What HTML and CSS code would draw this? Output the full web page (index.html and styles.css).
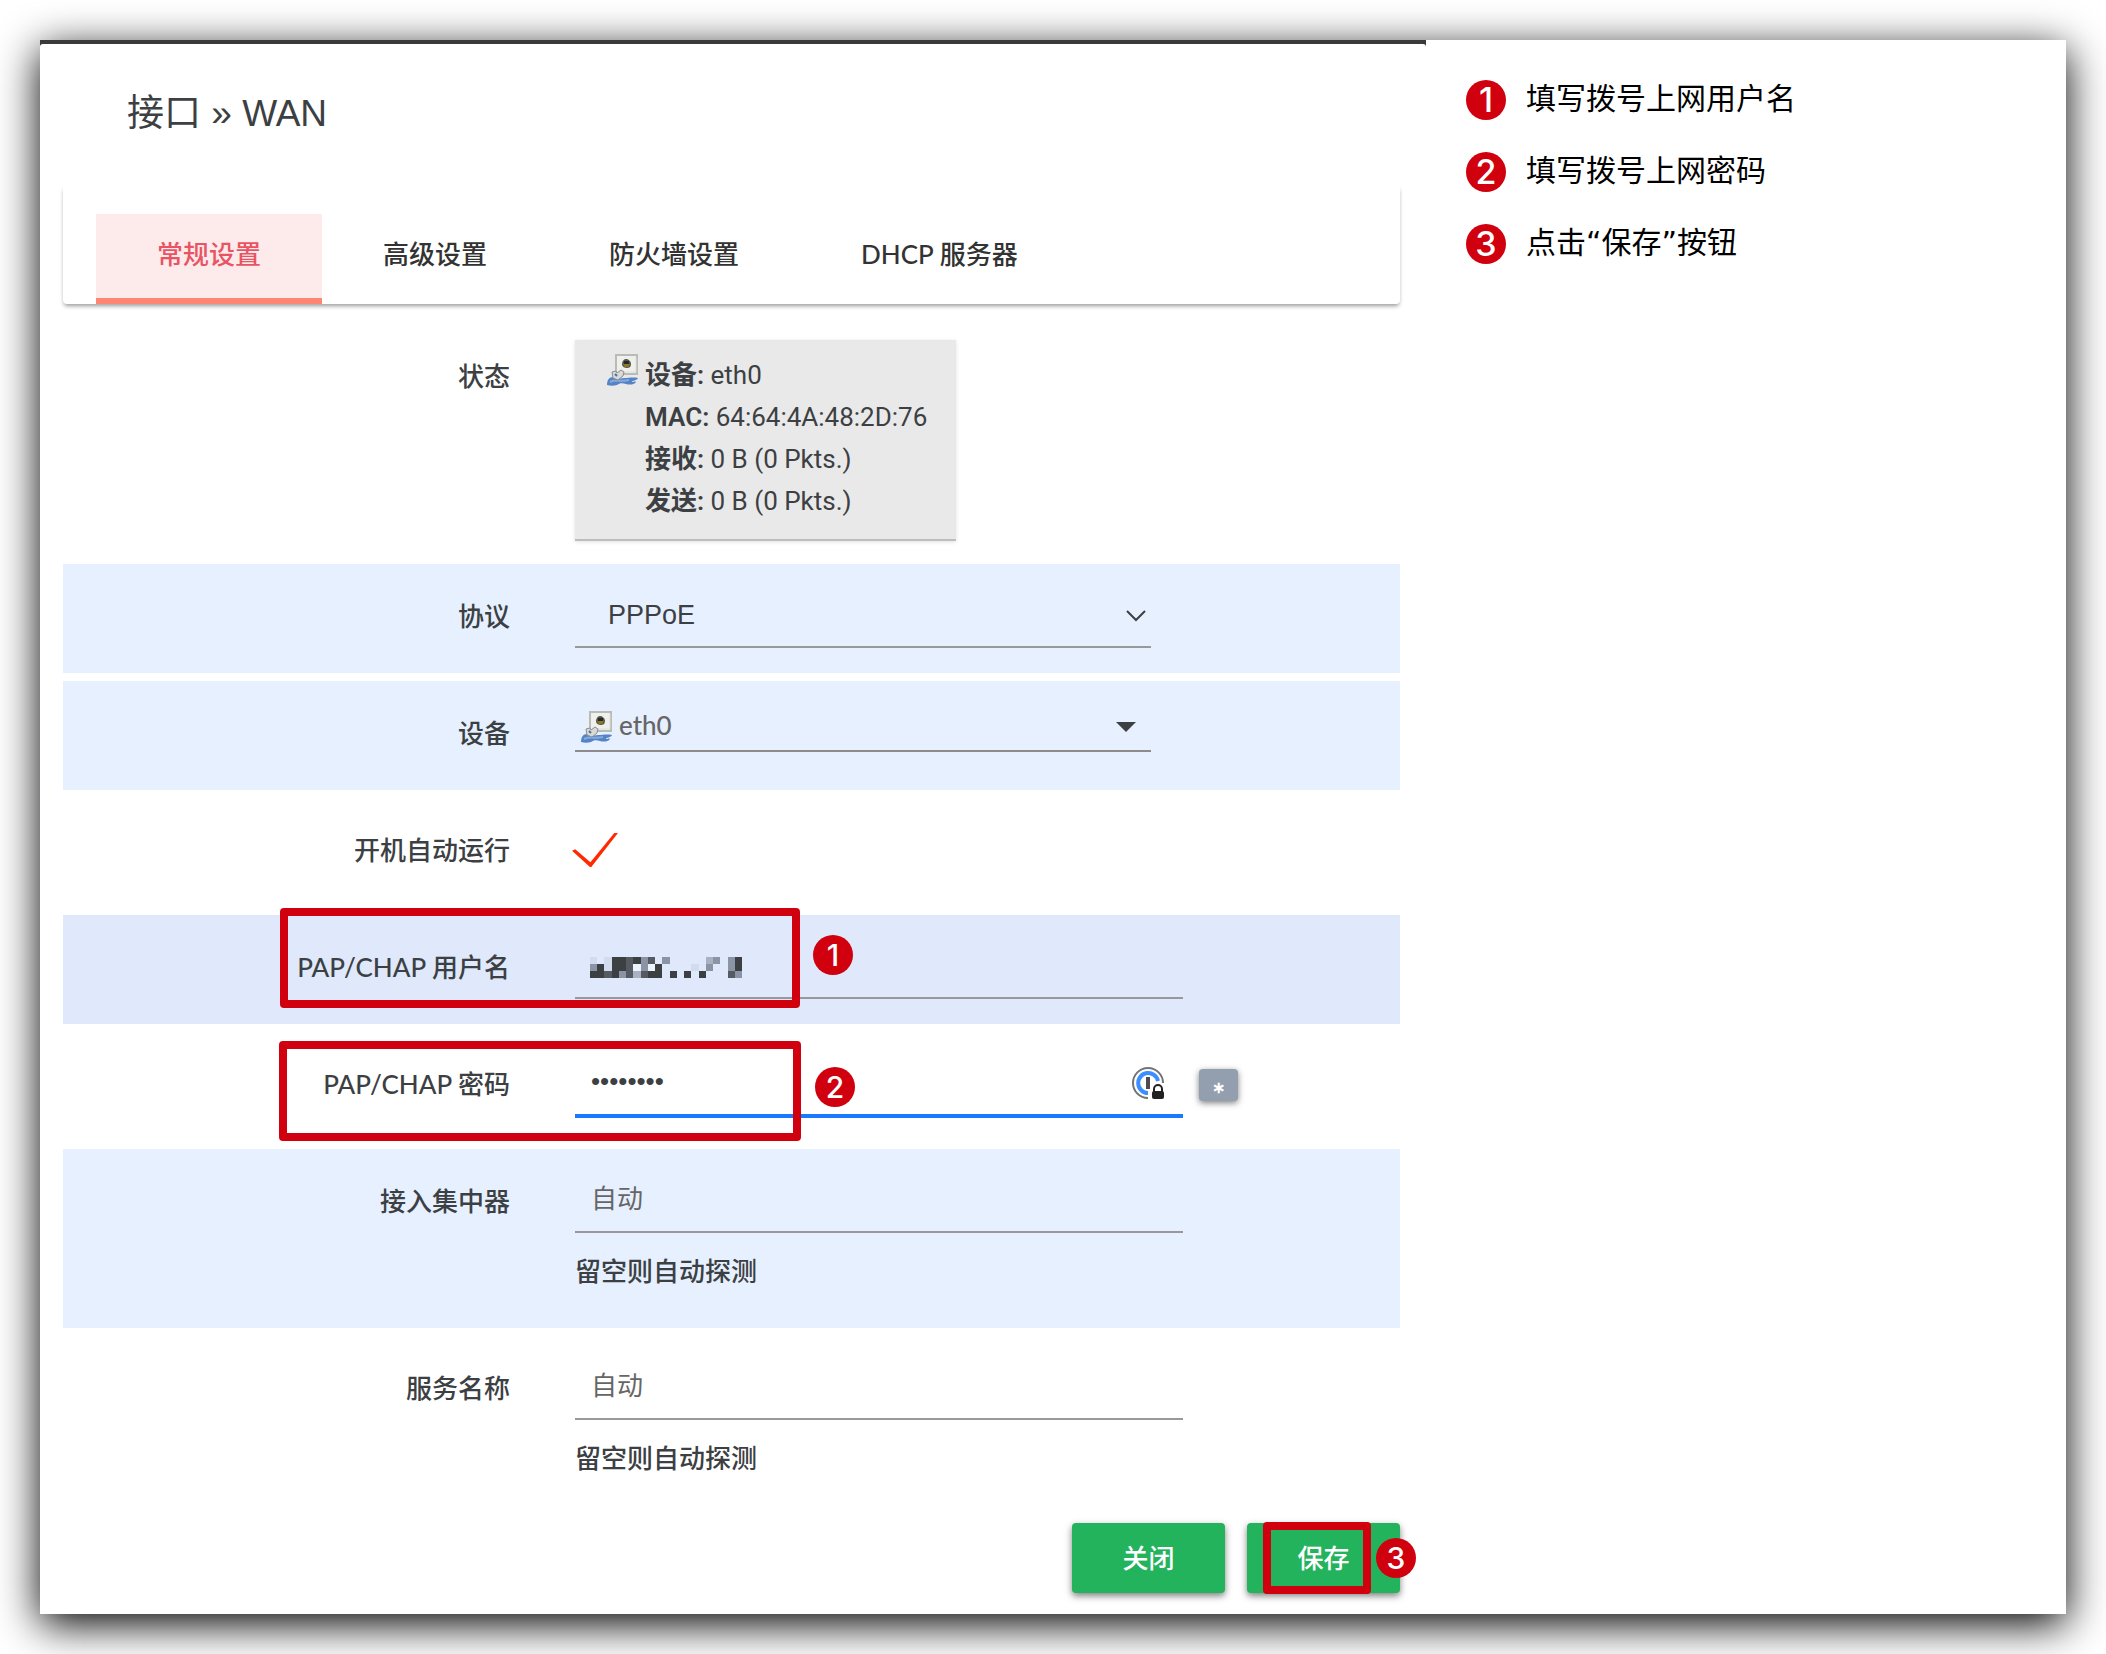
FILE: index.html
```html
<!DOCTYPE html>
<html lang="zh-CN">
<head>
<meta charset="utf-8">
<meta name="viewport" content="width=device-width, initial-scale=1">
<title>接口 » WAN</title>
<link rel="stylesheet" href="styles.css">
</head>
<body>
<svg class="defs" aria-hidden="true">
  <symbol id="ethernet" viewBox="0 0 32 32">
    <rect x="9" y="1" width="21" height="19" fill="#efefec" stroke="#b9bbb7" stroke-width="2"/>
    <path d="M11 18h18V3" fill="none" stroke="#dddeda" stroke-width="1"/>
    <path d="M15 10c0-3 2-5 4-5s5 2 5 5-2 4-4 4-5-1-5-4z" fill="#55574f"/>
    <path d="M17 7h5v3h-5z" fill="#26282a"/>
    <path d="M16 10h7l-2 3h-3z" fill="#8d7c1e"/>
    <path d="M0 31c0-5 2-8 6-8 4 1 7 2 11 1 5 0 9-1 14 0-1 3-6 2-6 4 2 0 4-1 4 0-2 3-7 3-10 2-4-1-6-1-9 1-3 1-7 1-10 0z" fill="#5484c6"/>
    <path d="M3 28c6-3 11 0 19-2" fill="none" stroke="#86aade" stroke-width="2"/>
    <path d="M5 18l4-1 1 2 4-3 3 2-1 4-5 4-5-2z" fill="#d9dad7" stroke="#8b8d8a" stroke-width="1"/>
    <path d="M8 20l2 2" fill="none" stroke="#4b6f9e" stroke-width="2"/>
  </symbol>
</svg>
<div class="card">
  <main class="pane">
    <div class="pane-body">
      <h1 class="title">接口 » WAN</h1>
      <nav class="tabs">
        <a class="tab tab-active" href="#general">常规设置</a>
        <a class="tab" href="#advanced">高级设置</a>
        <a class="tab" href="#firewall">防火墙设置</a>
        <a class="tab" href="#dhcp">DHCP 服务器</a>
      </nav>
      <form class="form">
        <div class="row row-status">
          <span class="label">状态</span>
          <div class="status">
            <svg class="eth-icon"><use href="#ethernet"/></svg>
            <div class="status-lines">
              <div><b>设备:</b> eth0</div>
              <div><b>MAC:</b> 64:64:4A:48:2D:76</div>
              <div><b>接收:</b> 0 B (0 Pkts.)</div>
              <div><b>发送:</b> 0 B (0 Pkts.)</div>
            </div>
          </div>
        </div>
        <div class="row row-tint">
          <label class="label" for="proto">协议</label>
          <div class="select-wrap">
            <select class="control select" id="proto"><option>PPPoE</option></select>
            <svg class="chevron" viewBox="0 0 20 12"><path d="M1 1l9 9 9-9" fill="none" stroke="#3c4043" stroke-width="2"/></svg>
          </div>
        </div>
        <div class="row row-tint">
          <span class="label" id="device-label">设备</span>
          <button class="device" type="button" aria-labelledby="device-label">
            <svg class="eth-icon"><use href="#ethernet"/></svg>
            <span class="device-name">eth0</span>
            <svg class="caret" viewBox="0 0 20 10"><path d="M0 0h20L10 10z" fill="#3c4043"/></svg>
          </button>
        </div>
        <div class="row">
          <label class="label" for="auto">开机自动运行</label>
          <input class="check" id="auto" type="checkbox" checked>
        </div>
        <div class="row row-user">
          <label class="label" for="user">PAP/CHAP 用户名</label>
          <div class="field">
            <input class="control" id="user" type="text">
            <svg class="mask" viewBox="0 0 21 3" preserveAspectRatio="none" shape-rendering="crispEdges">
              <path fill="#3c4043" d="M3 0h2v1H3zM6 0h1v1H6zM20 0h1v2h-1zM1 1h1v1H1zM3 1h2v1H3zM9 1h1v1H9zM0 2h2v1H0zM3 2h1v1H3zM8 2h2v1H8zM11 2h1v1h-1zM13 2h1v1h-1zM15 2h1v1h-1z"/>
              <path fill="#565b63" d="M8 0h1v1H8zM5 0h1v2H5zM2 2h1v1H2zM5 2h1v1H5zM7 2h1v1H7zM19 2h1v1h-1z"/>
              <path fill="#8b94a4" d="M7 0h1v2H7zM10 0h1v1h-1zM17 0h1v1h-1zM19 0h1v2h-1zM0 1h1v1H0zM16 1h1v1h-1zM4 2h1v1H4zM20 2h1v1h-1z"/>
              <path fill="#a9b2c2" d="M16 0h1v1h-1zM6 2h1v1H6z"/>
              <path fill="#d2dcee" d="M0 0h1v1H0zM2 0h1v2H2zM14 1h1v1h-1z"/>
              <path fill="#edf3fd" d="M6 1h1v1H6zM8 1h1v1H8z"/>
            </svg>
          </div>
          <span class="frame"></span>
          <span class="badge badge-side">1</span>
        </div>
        <div class="row">
          <label class="label" for="pass">PAP/CHAP 密码</label>
          <div class="field field-focus">
            <input class="control" id="pass" type="password" value="password">
            <svg class="key-icon" viewBox="0 0 32 32">
              <path d="M31 16A15 15 0 1 0 16 31" fill="none" stroke="#747474" stroke-width="2"/>
              <path d="M26 14A10 10 0 1 0 16 26" fill="none" stroke="#3a8eff" stroke-width="4"/>
              <path d="M14 10h4v12h-4z" fill="#4c4c4c"/>
              <path d="M22 25v-3a4 4 0 0 1 8 0v3" fill="none" stroke="#222" stroke-width="2"/>
              <rect x="20" y="24" width="12" height="8" rx="2" fill="#222"/>
            </svg>
          </div>
          <button class="reveal" type="button">∗</button>
          <span class="frame"></span>
          <span class="badge badge-side">2</span>
        </div>
        <div class="row row-tint">
          <label class="label" for="ac">接入集中器</label>
          <div class="field">
            <input class="control" id="ac" type="text" placeholder="自动">
            <p class="hint">留空则自动探测</p>
          </div>
        </div>
        <div class="row">
          <label class="label" for="service">服务名称</label>
          <div class="field">
            <input class="control" id="service" type="text" placeholder="自动">
            <p class="hint">留空则自动探测</p>
          </div>
        </div>
        <div class="actions">
          <button class="btn" type="button">关闭</button>
          <div class="save">
            <button class="btn" type="submit">保存</button>
            <span class="frame frame-save"></span>
            <span class="badge badge-save">3</span>
          </div>
        </div>
      </form>
    </div>
  </main>
  <aside class="notes">
    <ol class="note-list">
      <li class="note"><span class="badge badge-note">1</span>填写拨号上网用户名</li>
      <li class="note"><span class="badge badge-note">2</span>填写拨号上网密码</li>
      <li class="note"><span class="badge badge-note">3</span>点击“保存”按钮</li>
    </ol>
  </aside>
</div>
</body>
</html>
```
FILE: styles.css
```css
* { box-sizing: border-box; }

body {
  margin: 0;
  padding: 40px;
  background: #fff;
  color: #3c4043;
  font: 500 26px/42px Lato, "Noto Sans CJK SC", sans-serif;
}

button, input, select { font: inherit; color: inherit; }

.defs { display: none; }

.card {
  display: grid;
  grid-template-columns: 1386fr 640fr;
  background: #fff;
  box-shadow: 0 10px 40px #000;
}

.pane {
  padding-top: 4px;
  background: linear-gradient(#3a393b 8px, #fff 8px);
}

.pane-body {
  padding: 0 26px 21px 23px;
  background: #fff;
  border-radius: 3px 3px 0 0;
}

.title {
  margin: 0;
  padding: 42px 64px 43px;
  font: 400 37px/56px "Liberation Sans", "Noto Sans CJK SC", sans-serif;
}

.tabs {
  display: flex;
  margin-bottom: 20px;
  padding: 29px 33px 0;
  border-radius: 4px;
  box-shadow: 0 3px 4px -1px rgba(0, 0, 0, 0.4);
}

.tab {
  padding: 19px 61px 23px;
  border-bottom: 6px solid transparent;
  color: #333;
  text-decoration: none;
}

.tab-active {
  border-color: #ff8672;
  background: #fdebeb;
  color: #e95464;
}

.form {
  display: flex;
  flex-direction: column;
  gap: 8px;
}

.row {
  position: relative;
  display: flex;
  align-items: flex-start;
  min-height: 109px;
  padding: 24px 0 25px;
}

.row-tint { background: #e6f0ff; }
.row-user { background: #dfe9fb; }
.row-status { padding: 16px 0 15px; }
.row-status .label { padding-top: 8px; }

.label {
  flex: none;
  width: 447px;
  margin-right: 65px;
  line-height: 56px;
  text-align: right;
}

.status {
  display: flex;
  gap: 6px;
  min-width: 381px;
  padding: 14px 24px 17px 32px;
  border-bottom: 2px solid #bdbdbd;
  background: #e9e9e9;
  box-shadow: 0 1px 4px rgba(0, 0, 0, 0.12);
}

.status-lines {
  font-family: Roboto, "Noto Sans CJK SC", sans-serif;
  font-weight: 400;
}

.status b { font-weight: 600; }

.eth-icon {
  flex: none;
  width: 32px;
  height: 32px;
}

.control {
  display: block;
  width: 100%;
  height: 60px;
  padding: 0 16px 8px;
  border: 0;
  border-bottom: 2px solid #999;
  border-radius: 0;
  outline: 0;
  background: transparent;
}

.control::placeholder { color: #666; font-weight: 400; opacity: 1; }

.select-wrap {
  position: relative;
  flex: 0 1 576px;
}

.select {
  padding: 0 32px 4px 33px;
  font: 400 27px "Liberation Sans", sans-serif;
  appearance: none;
}

.chevron {
  position: absolute;
  top: 22px;
  right: 5px;
  width: 20px;
  height: 12px;
}

.device {
  display: flex;
  flex: 0 1 576px;
  align-items: center;
  gap: 6px;
  height: 47px;
  padding: 0 15px 2px 6px;
  border: 0;
  border-bottom: 2px solid #8f8b8d;
  background: transparent;
  color: #666;
  text-align: left;
}

.device-name { flex: 1; padding-bottom: 4px; }

.caret {
  width: 20px;
  height: 10px;
}

.check {
  width: 46px;
  height: 34px;
  margin: 11px 0 0 -3px;
  appearance: none;
  background: #ff2a00;
  clip-path: polygon(0 52%, 7% 48%, 40% 86%, 92% 0, 100% 0, 42% 100%, 39% 100%);
}

.field {
  position: relative;
  flex: 0 1 608px;
}

.field-focus .control {
  height: 62px;
  margin-bottom: -2px;
  border-bottom: 4px solid #1a7aff;
  font-family: "Liberation Sans", sans-serif;
}

.mask {
  position: absolute;
  top: 18px;
  left: 15px;
  width: 152px;
  height: 21px;
}

.key-icon {
  position: absolute;
  top: 11px;
  right: 19px;
  width: 32px;
  height: 32px;
}

.reveal {
  width: 39px;
  height: 32px;
  margin: 13px 0 0 16px;
  padding: 4px 0 0;
  border: 0;
  border-radius: 4px;
  background: #939fae;
  box-shadow: 0 2px 6px rgba(0, 0, 0, 0.5);
  color: #fff;
  font-size: 16px;
  font-weight: 700;
  line-height: 28px;
}

.hint {
  margin: 0;
  padding: 17px 0 11px;
}

.actions {
  display: flex;
  justify-content: flex-end;
  gap: 22px;
}

.btn {
  width: 153px;
  height: 70px;
  padding: 0;
  border: 0;
  border-radius: 4px;
  background: #24b35d;
  box-shadow: 0 3px 7px rgba(0, 0, 0, 0.5);
  color: #fff;
}

.save {
  position: relative;
  display: flex;
}

/* Call-outs drawn over the form */
.frame {
  position: absolute;
  top: -7px;
  left: 217px;
  width: 520px;
  height: 100px;
  border: 8px solid #d0000f;
  border-radius: 4px;
  pointer-events: none;
}

.field-focus ~ .frame {
  top: 9px;
  left: 216px;
  width: 522px;
}

.badge {
  display: grid;
  flex: none;
  place-items: center;
  width: 40px;
  height: 40px;
  border-radius: 50%;
  background: #d0000f;
  color: #fff;
  font: 500 30px/40px Inter, sans-serif;
}

.badge-side {
  position: absolute;
  top: 20px;
  left: 750px;
}

.field-focus ~ .badge-side { top: 35px; left: 752px; }

.frame-save {
  top: -1px;
  left: 16px;
  width: 108px;
  height: 72px;
}

.badge-save {
  position: absolute;
  top: 15px;
  right: -16px;
}

.notes {
  padding: 37px 40px;
  color: #000;
  font: 400 30px/44px "DejaVu Sans", "Noto Sans CJK SC", sans-serif;
}

.note-list {
  display: grid;
  gap: 28px;
  margin: 0;
  padding: 0;
  list-style: none;
}

.note {
  display: flex;
  gap: 20px;
}

.badge-note {
  margin-top: 3px;
  font-size: 34px;
}
```
